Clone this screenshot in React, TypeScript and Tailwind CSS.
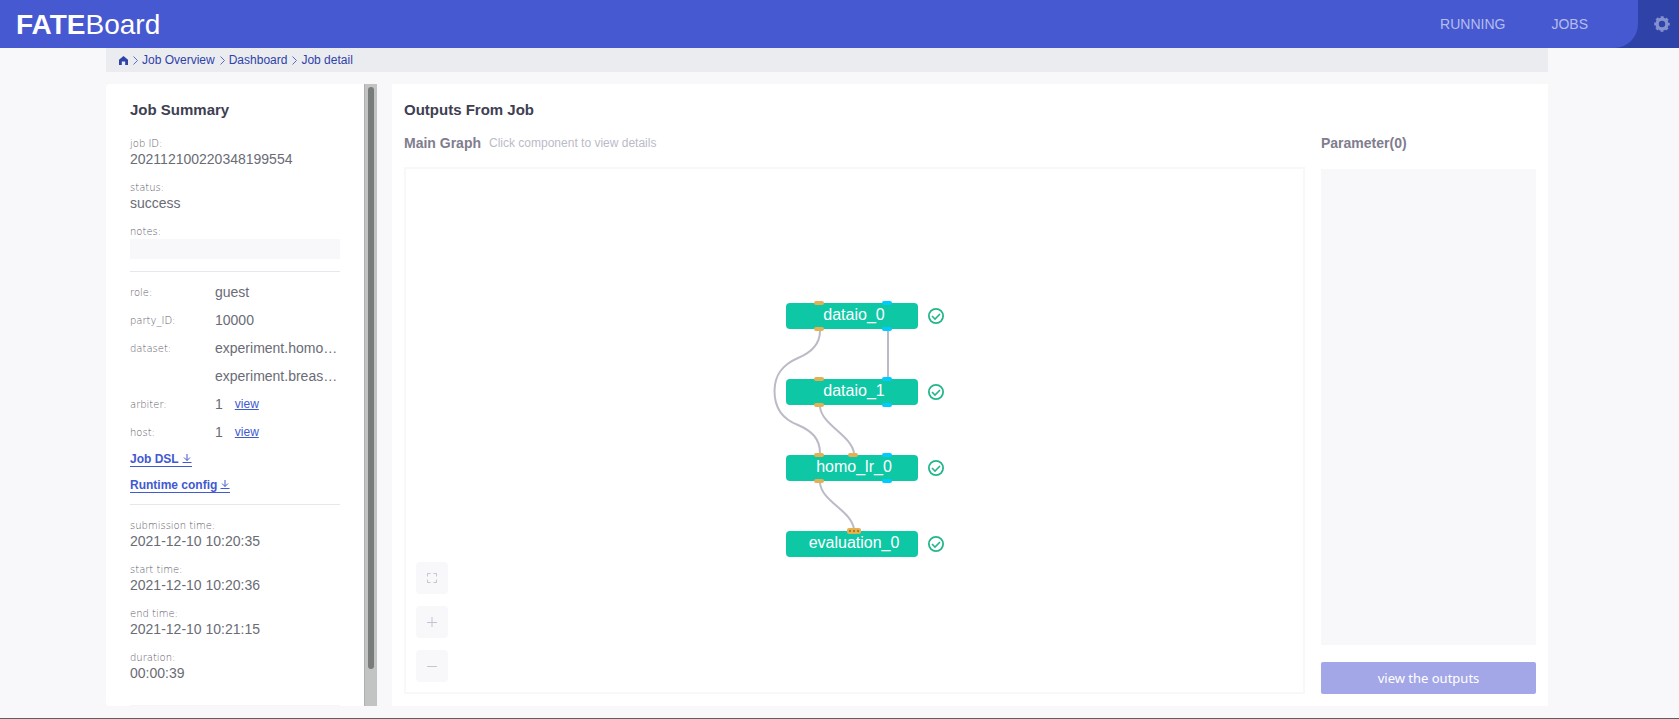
import { Fragment } from 'react'

const crumbs = ['Job Overview', 'Dashboard', 'Job detail']

const times = [
    { label: 'submission time:', value: '2021-12-10 10:20:35' },
    { label: 'start time:', value: '2021-12-10 10:20:36' },
    { label: 'end time:', value: '2021-12-10 10:21:15' },
    { label: 'duration:', value: '00:00:39' },
]

const nodes = [
    { name: 'dataio_0', y: 6, inputs: [50], outputs: [50], data: true },
    { name: 'dataio_1', y: 82, inputs: [50], outputs: [50], data: true },
    { name: 'homo_lr_0', y: 158, inputs: [50, 84], outputs: [50], data: true },
    { name: 'evaluation_0', y: 234, inputs: [], outputs: [], data: false },
]

const labelClass = "block font-['DejaVu_Sans'] font-extralight text-[10px] leading-[15px] text-[#5f5e6c]"

const Header = () => {
    return (
        <header className="flex h-12 shrink-0 bg-[#2e42a8]">
            <div className="flex flex-1 items-center justify-between rounded-br-3xl bg-[#4759d1] pl-4 pr-[50px]">
                <h1 className="pt-[2px] text-[28px] leading-8 text-white"><b>FATE</b>Board</h1>
                <nav className="flex gap-[46px] text-sm text-[#b5bdec]">
                    <a href="#running">RUNNING</a>
                    <a href="#jobs">JOBS</a>
                </nav>
            </div>
            <button aria-label="Settings" className="flex w-[41px] items-center justify-center pl-[6px]">
                <svg width="16" height="16" viewBox="0 0 16 16">
                    <circle cx="8" cy="8" r="4.9" fill="none" stroke="#8491ce" strokeWidth="3.4" />
                    <circle cx="8" cy="8" r="6.8" fill="none" stroke="#8491ce" strokeWidth="2" strokeDasharray="3 2.34" strokeDashoffset="1.5" />
                </svg>
            </button>
        </header>
    )
}

const Breadcrumb = () => {
    return (
        <nav className="flex h-6 shrink-0 items-center bg-[#ebecf0] pl-[13px] text-xs text-[#2e42a8]">
            <a href="#home" aria-label="Home">
                <svg width="9" height="9" viewBox="0 0 9 9" fill="#2e42a8">
                    <path d="M4.5 0 L9 3.8 V9 H6.2 V5.6 H2.8 V9 H0 V3.8 Z" />
                </svg>
            </a>
            {crumbs.map((crumb) => (
                <Fragment key={crumb}>
                    <svg className="ml-[5px] mr-1" width="5" height="9" viewBox="0 0 5 9" fill="none" stroke="#5c6bbf">
                        <path d="M0.5 0.5 L4.5 4.5 L0.5 8.5" />
                    </svg>
                    <a href="#crumb">{crumb}</a>
                </Fragment>
            ))}
        </nav>
    )
}

const Field = ({ label, value }: { label: string; value: string }) => {
    return (
        <div className="mb-3">
            <span className={labelClass}>{label}</span>
            <p className="text-sm leading-[17px] text-[#6a6c75]">{value}</p>
        </div>
    )
}

const Row = ({ label, value, link }: { label: string; value: string; link?: boolean }) => {
    return (
        <div className="flex h-7 items-center">
            <span className={labelClass + ' w-[85px] shrink-0'}>{label}</span>
            <span className="text-sm whitespace-nowrap text-[#6a6c75]">{value}</span>
            {link && <a href="#view" className="ml-3 text-xs text-[#4159d1] underline">view</a>}
        </div>
    )
}

const Download = ({ text }: { text: string }) => {
    return (
        <div className="flex h-[26px] items-center">
            <a href="#download" className="flex items-center gap-[3px] border-b border-[#4159d1] text-xs leading-[14px] font-bold text-[#4159d1]">
                {text}
                <svg width="10" height="10" viewBox="0 0 10 10" fill="none" stroke="#4159d1">
                    <path d="M5 0 V6.5 M2 3.5 L5 6.5 L8 3.5 M0.5 8.5 H9.5" />
                </svg>
            </a>
        </div>
    )
}

const JobSummary = () => {
    return (
        <aside className="flex w-[271px] shrink-0 overflow-hidden rounded-l bg-white">
            <div className="min-w-0 flex-1 overflow-hidden px-6 pt-[14px]">
                <h2 className="mb-[14px] text-[15px] leading-6 font-bold text-[#3e4052]">Job Summary</h2>
                <Field label="job ID:" value="202112100220348199554" />
                <Field label="status:" value="success" />
                <label htmlFor="notes" className={labelClass}>notes:</label>
                <input id="notes" className="block h-5 w-full bg-[#f8f8fa] px-1 text-xs" />
                <hr className="mt-3 mb-[6px] border-[#e6e7eb]" />
                <Row label="role:" value="guest" />
                <Row label="party_ID:" value="10000" />
                <Row label="dataset:" value="experiment.homo…" />
                <Row label="" value="experiment.breas…" />
                <Row label="arbiter:" value="1" link />
                <Row label="host:" value="1" link />
                <Download text="Job DSL" />
                <Download text="Runtime config" />
                <hr className="mt-[6px] mb-[13px] border-[#e6e7eb]" />
                {times.map((time) => (
                    <Field key={time.label} label={time.label} value={time.value} />
                ))}
                <hr className="mt-[23px] border-[#f6f6f8]" />
            </div>
            <div className="flex w-[13px] justify-center border-l border-[#aeb0af] bg-[#c2c4c3] pt-[3px]">
                <div className="h-[94%] w-[6px] rounded-full bg-[#787c7b]"></div>
            </div>
        </aside>
    )
}

const Graph = () => {
    return (
        <svg width="182" height="268" viewBox="0 0 182 268">
            <g fill="none" stroke="#bbbbc8" strokeWidth="2">
                <path d="M56 34 C56 48 46 56 34 61 C18 68 10.5 78 10.5 94 C10.5 111 18 122 34 128 C48 134 56 142 56 156" />
                <path d="M124 34 V80" />
                <path d="M56 110 C58 128 87 138 90 156" />
                <path d="M56 186 C58 205 87 213 90 232" />
            </g>
            {nodes.map((node) => (
                <g key={node.name}>
                    <rect x="22" y={node.y} width="132" height="26" rx="4" fill="#0ec7a5" />
                    <text x="90" y={node.y + 17} textAnchor="middle" fontSize="16" fill="#ffffff">{node.name}</text>
                    {node.inputs.map((x) => (
                        <rect key={x} x={x} y={node.y - 2} width="10" height="4" rx="2" fill="#e4b054" />
                    ))}
                    {node.outputs.map((x) => (
                        <rect key={x} x={x} y={node.y + 24} width="10" height="4" rx="2" fill="#e4b054" />
                    ))}
                    {node.data && (
                        <g fill="#00cbff">
                            <rect x="118" y={node.y - 2} width="10" height="4" rx="2" />
                            <rect x="118" y={node.y + 24} width="10" height="4" rx="2" />
                        </g>
                    )}
                    <g fill="none" stroke="#24b68b">
                        <circle cx="172" cy={node.y + 13} r="7.1" strokeWidth="1.8" />
                        <path d={`M168 ${node.y + 13} l3 3 l5 -5`} strokeWidth="1.6" />
                    </g>
                </g>
            ))}
            <rect x="83" y="231" width="14" height="6" rx="2" fill="#e4b054" />
            <g fill="#b87a14">
                <rect x="85" y="233" width="2" height="2" />
                <rect x="89" y="233" width="2" height="2" />
                <rect x="93" y="233" width="2" height="2" />
            </g>
        </svg>
    )
}

const zoomButtons = [
    { name: 'Fit', d: 'M0.5 3.5 V0.5 H3.5 M6.5 0.5 H9.5 V3.5 M9.5 6.5 V9.5 H6.5 M3.5 9.5 H0.5 V6.5' },
    { name: 'Zoom in', d: 'M0 5.5 H10 M5 0 V10' },
    { name: 'Zoom out', d: 'M0 5.5 H10' },
]

const Outputs = () => {
    return (
        <main className="flex min-w-0 flex-1 flex-col bg-white px-3 pt-[14px] pb-3">
            <h2 className="text-[15px] leading-6 font-bold text-[#3e4052]">Outputs From Job</h2>
            <div className="flex min-h-0 flex-1 gap-4">
                <section className="flex min-w-0 flex-1 flex-col">
                    <div className="flex h-[45px] items-center gap-2 pb-[3px]">
                        <h3 className="text-sm font-bold text-[#7f7d8e]">Main Graph</h3>
                        <span className="text-xs text-[#bbbbc8]">Click component to view details</span>
                    </div>
                    <div className="relative flex flex-1 items-center justify-center border-2 border-[#f8f8fa]">
                        <Graph />
                        <div className="absolute bottom-[10px] left-[10px] flex flex-col gap-3">
                            {zoomButtons.map((button) => (
                                <button key={button.name} aria-label={button.name} className="flex size-8 items-center justify-center rounded bg-[#f8f8fa]">
                                    <svg width="10" height="10" viewBox="0 0 10 10" fill="none" stroke="#c4c4d2">
                                        <path d={button.d} />
                                    </svg>
                                </button>
                            ))}
                        </div>
                    </div>
                </section>
                <section className="flex w-[215px] shrink-0 flex-col">
                    <h3 className="flex h-[47px] items-center pb-[5px] text-sm font-bold text-[#7f7d8e]">Parameter(0)</h3>
                    <div className="flex-1 bg-[#f8f8fa]"></div>
                    <button className="mt-[17px] h-8 rounded-xs bg-[#a4a7e7] pt-px font-['Noto_Sans'] text-[13px] text-white">view the outputs</button>
                </section>
            </div>
        </main>
    )
}

const App = () => {
    return (
        <div className="flex h-screen min-h-[719px] flex-col border-b border-[#5f5f5f] bg-[#f8f8fa] font-['Liberation_Sans',sans-serif]">
            <Header />
            <div className="flex min-h-0 flex-1 flex-col pr-[131px] pb-3 pl-[106px]">
                <Breadcrumb />
                <div className="mt-3 flex min-h-0 flex-1 gap-[15px]">
                    <JobSummary />
                    <Outputs />
                </div>
            </div>
        </div>
    )
}

export default App
